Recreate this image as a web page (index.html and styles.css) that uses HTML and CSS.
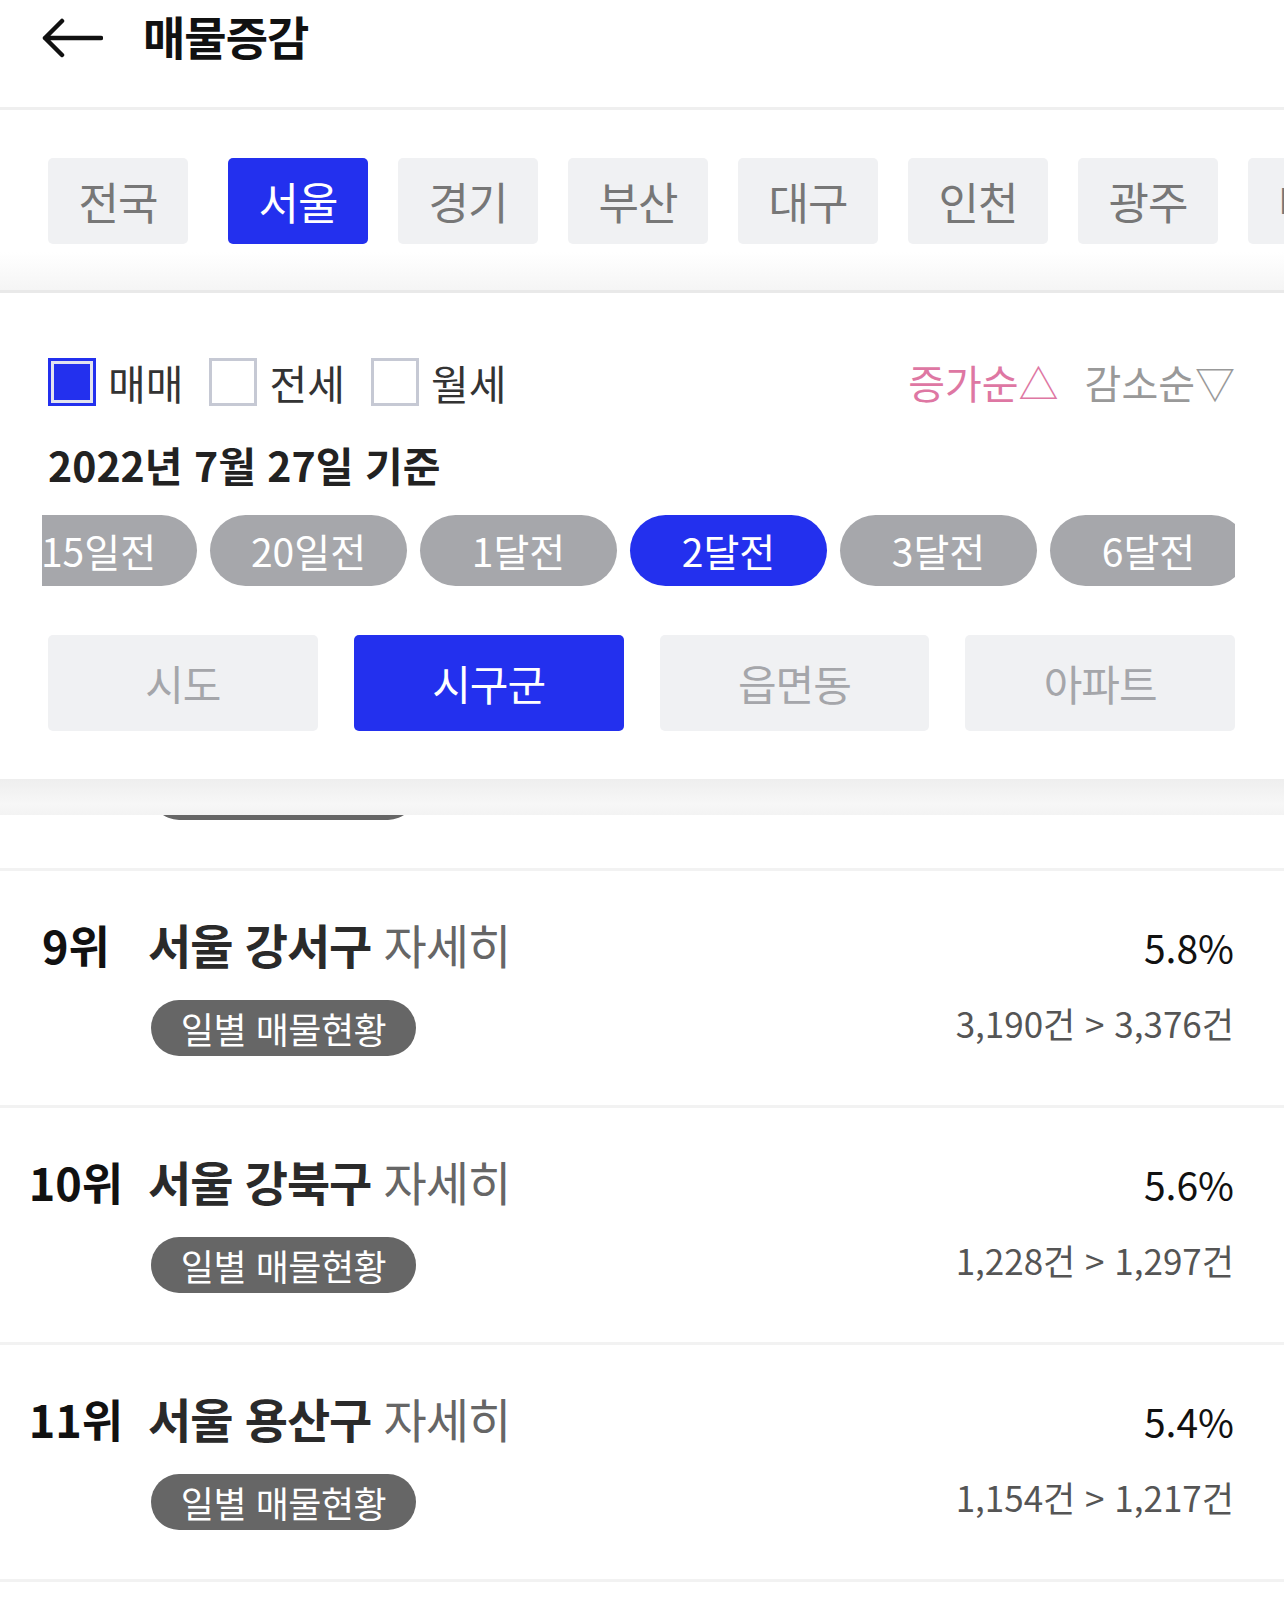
FILE: index.html
```html
<!DOCTYPE html>
<html lang="ko">
<head>
    <meta charset="UTF-8">
    <title>매물증감</title>
    <link rel="stylesheet" href="styles.css">
</head>
<body>
<div class="top">
    <span class="back">
        <svg width="62" height="40" viewBox="0 0 62 40"><path d="M4 20 H60 M21 3 L4 20 L21 37" fill="none" stroke="#111" stroke-width="4.5" stroke-linecap="round" stroke-linejoin="round"/></svg>
    </span>
    <h1 class="title">매물증감</h1>
</div>

<!-- 지역 선택 -->
<div class="area">
    <ul class="area-list">
        <li>전국</li>
        <li class="on">서울</li>
        <li>경기</li>
        <li>부산</li>
        <li>대구</li>
        <li>인천</li>
        <li>광주</li>
        <li>대전</li>
    </ul>
</div>

<!-- 필터 -->
<div class="filter">
    <div class="filter-top">
        <div class="types">
            <label class="chk on"><i></i>매매</label>
            <label class="chk"><i></i>전세</label>
            <label class="chk"><i></i>월세</label>
        </div>
        <div class="sort">
            <span class="up">증가순△</span>
            <span class="down">감소순▽</span>
        </div>
    </div>
    <p class="base-date">2022년 7월 27일 기준</p>
    <div class="period">
        <ul>
            <li>15일전</li>
            <li>20일전</li>
            <li>1달전</li>
            <li class="on">2달전</li>
            <li>3달전</li>
            <li>6달전</li>
        </ul>
    </div>
    <ul class="level">
        <li>시도</li>
        <li class="on">시구군</li>
        <li>읍면동</li>
        <li>아파트</li>
    </ul>
</div>
<div class="filter-shade"></div>

<!-- 위로 스크롤된 8위 항목의 끝부분 -->
<div class="cut"><div class="cut-tag"><span></span></div></div>

<ul class="rank-list">
    <li class="item">
        <div class="rank">9위</div>
        <div class="info">
            <div class="line1"><p class="name"><b>서울 강서구</b> 자세히</p><span class="rate">5.8%</span></div>
            <div class="line2"><a class="tag">일별 매물현황</a><span class="count">3,190건 &gt; 3,376건</span></div>
        </div>
    </li>
    <li class="item">
        <div class="rank">10위</div>
        <div class="info">
            <div class="line1"><p class="name"><b>서울 강북구</b> 자세히</p><span class="rate">5.6%</span></div>
            <div class="line2"><a class="tag">일별 매물현황</a><span class="count">1,228건 &gt; 1,297건</span></div>
        </div>
    </li>
    <li class="item">
        <div class="rank">11위</div>
        <div class="info">
            <div class="line1"><p class="name"><b>서울 용산구</b> 자세히</p><span class="rate">5.4%</span></div>
            <div class="line2"><a class="tag">일별 매물현황</a><span class="count">1,154건 &gt; 1,217건</span></div>
        </div>
    </li>
</ul>
</body>
</html>
```

FILE: styles.css
```css
* {
    margin: 0;
    padding: 0;
    box-sizing: border-box;
    list-style: none;
}

body {
    width: 1284px;
    overflow: hidden;
    background: #fff;
    color: #222;
    font-family: "Noto Sans CJK KR", "Noto Sans", sans-serif;
}

/* 상단 */
.top {
    display: flex;
    align-items: center;
    height: 107px;
    padding: 0 0 32px 41px;
}

.top .back {
    display: block;
    width: 62px;
    height: 40px;
}

.top .title {
    margin: 0 0 5px 40px;
    font-size: 46px;
    font-weight: 700;
    letter-spacing: -1px;
    line-height: 1;
    color: #111;
}

/* 지역 */
.area {
    height: 186px;
    padding: 48px 0 0 48px;
    overflow: hidden;
    border-top: 3px solid #efefef;
    border-bottom: 3px solid #e9e9e9;
    background: linear-gradient(#fff 142px, #f5f5f5 180px);
}

.area-list {
    display: flex;
    gap: 30px;
}

.area-list li {
    flex: none;
    width: 140px;
    height: 86px;
    border-radius: 5px;
    background: #f0f1f3;
    color: #777;
    font-size: 44px;
    letter-spacing: -1px;
    line-height: 86px;
    text-align: center;
}

.area-list li:first-child {
    margin-right: 10px;
}

.area-list li.on {
    background: #2330ee;
    color: #fff;
}

/* 필터 */
.filter {
    padding: 65px 49px 48px 48px;
}

.filter-top {
    display: flex;
    justify-content: space-between;
    align-items: center;
    height: 48px;
}

.types {
    display: flex;
}

.chk {
    display: flex;
    align-items: center;
    margin-right: 26px;
    font-size: 41px;
    line-height: 48px;
    color: #333;
}

.chk i {
    width: 48px;
    height: 48px;
    margin-right: 12px;
    border: 3px solid #c6c9d4;
    background: #fff;
}

.chk.on i {
    border-color: #2330ee;
    background: #2330ee;
    box-shadow: inset 0 0 0 3px #e2e3ef;
}

.sort {
    display: flex;
    font-size: 40px;
    line-height: 48px;
}

.sort .up {
    color: #de77a3;
}

.sort .down {
    margin-left: 26px;
    color: #999;
}

.base-date {
    margin-top: 34px;
    font-size: 41px;
    font-weight: 700;
    line-height: 48px;
    color: #222;
}

.period {
    margin: 27px 0 0 -6px;
    overflow: hidden;
}

.period ul {
    display: flex;
    gap: 13px;
    margin-left: -42px;
}

.period li {
    flex: none;
    width: 197px;
    height: 71px;
    border-radius: 36px;
    background: #a6a7ab;
    color: #fff;
    font-size: 39px;
    line-height: 71px;
    text-align: center;
}

.period li.on {
    background: #2330ee;
}

.level {
    display: grid;
    grid-template-columns: repeat(4, 1fr);
    gap: 36px;
    margin-top: 49px;
}

.level li {
    height: 96px;
    border-radius: 5px;
    background: #f0f1f3;
    color: #a5a6aa;
    font-size: 42px;
    letter-spacing: -1px;
    line-height: 96px;
    text-align: center;
}

.level li.on {
    background: #2330ee;
    color: #fff;
}

.filter-shade {
    height: 36px;
    background: linear-gradient(#eeeeee, #f7f7f7 70%, #f3f3f3);
}

/* 목록 */
.cut {
    height: 53px;
    padding-left: 151px;
}

.cut-tag {
    width: 265px;
    height: 5px;
    overflow: hidden;
}

.cut-tag span {
    display: block;
    height: 56px;
    margin-top: -51px;
    border-radius: 28px;
    background: #666;
}

.rank-list {
    border-bottom: 3px solid #f2f2f2;
}

.item {
    display: flex;
    align-items: baseline;
    height: 237px;
    padding: 47px 50px 0 0;
    border-top: 3px solid #f2f2f2;
}

.rank {
    flex: none;
    width: 148px;
    padding: 0 20px 0 24px;
    font-size: 45px;
    font-weight: 700;
    line-height: 52px;
    text-align: center;
    white-space: nowrap;
    color: #111;
}

.info {
    flex: 1;
}

.line1 {
    display: flex;
    justify-content: space-between;
    align-items: baseline;
    height: 52px;
    line-height: 52px;
}

.name {
    font-size: 47px;
    letter-spacing: -1px;
    color: #666;
}

.name b {
    font-weight: 700;
    color: #2a2a2a;
}

.rate {
    font-size: 39px;
    color: #111;
}

.line2 {
    display: flex;
    justify-content: space-between;
    align-items: flex-start;
    margin-top: 30px;
}

.tag {
    width: 265px;
    height: 56px;
    margin-left: 3px;
    border-radius: 28px;
    background: #666;
    color: #fff;
    font-size: 36px;
    letter-spacing: -0.5px;
    line-height: 56px;
    text-align: center;
}

.count {
    font-size: 35px;
    line-height: 46px;
    color: #555;
}
```
